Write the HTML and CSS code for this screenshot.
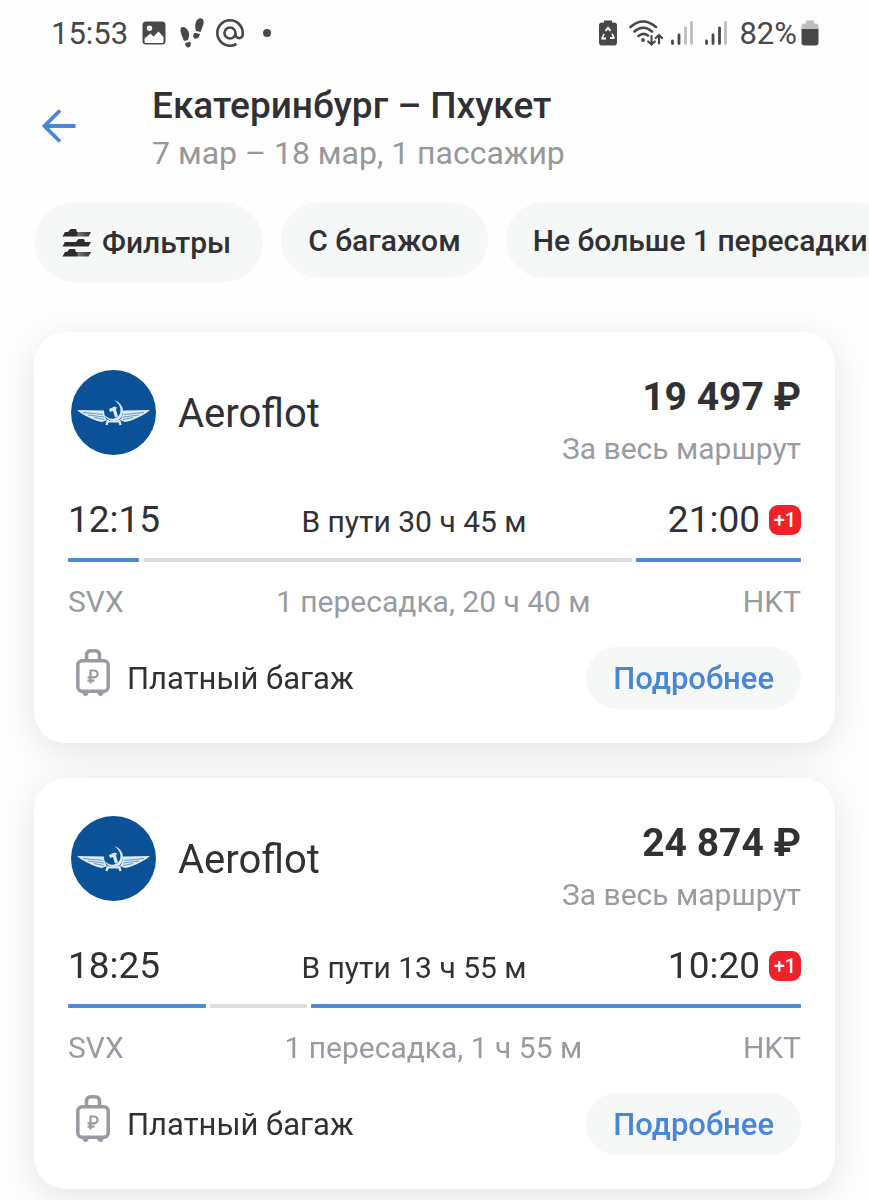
FILE: index.html
```
<!DOCTYPE html>
<html lang="ru">
<head>
    <meta charset="UTF-8">
    <meta name="viewport" content="width=device-width, initial-scale=1">
    <title>Екатеринбург – Пхукет</title>
    <link rel="stylesheet" href="styles.css">
</head>
<body>

<!-- shared icons -->
<svg class="sprite" width="0" height="0">
    <symbol id="logo" viewBox="0 0 85 85">
        <circle cx="42.5" cy="42.5" r="42.5" fill="#0b5197"/>
        <g fill="#dcebf7">
            <path d="M6 40L33 40.500Q33 46 36 50L31 52Q25 51 20 48.500L14 45.500Q9 43 6 40z"/>
            <path d="M79 40L52 40.500Q52 46 49 50L54 52Q60 51 65 48.500L71 45.500Q76 43 79 40z"/>
            <path d="M43 30Q52 33 52 41.500Q51 51 42.500 51Q35.500 50.500 33.500 45Q38 49.500 43 48.500Q49 47 49.500 41Q49.500 34 43 30z"/>
            <path d="M38 39L43.500 36.500L46 37.500L45 39.500L47 46.500L44 47.500L42 41L39 42z"/>
            <path d="M37 50L35.500 55M48 50L49.500 55" stroke="#dcebf7" stroke-width="2.400"/>
            <path d="M37 50.500H48V52.500H37z"/>
        </g>
        <path d="M12 42.500L32 44.500M17 45L33 47M73 42.500L53 44.500M68 45L52 47M23 47.500L33 49.500M62 47.500L52 49.500" stroke="#4c83b7" stroke-width=".8"/>
    </symbol>
    <symbol id="bag" viewBox="0 0 34 47">
        <g fill="none" stroke="#999ba3" stroke-width="3.600">
            <rect x="1.800" y="11.800" width="30.400" height="30.400" rx="4.500"/>
            <path d="M10.500 11V6.500Q10.500 1.800 15 1.800H19Q23.500 1.800 23.500 6.500V11"/>
            <path d="M14.500 34.500V21.500H18.200A3.400 3.400 0 0 1 18.200 28.300H11.500M11.500 31.600H18.500" stroke-width="2.200"/>
        </g>
        <path d="M6 43H13Q12 47 9.500 47T6 43zM21 43H28Q27 47 24.500 47T21 43z" fill="#999ba3"/>
    </symbol>
</svg>

<div class="status">
    <div class="status-side">
        <span>15:53</span>
        <svg class="ic-photo" width="24" height="24" viewBox="0 0 24 24">
            <path fill="#484848" fill-rule="evenodd" d="M4 0.500H20Q23.500 0.500 23.500 4V20Q23.500 23.500 20 23.500H4Q0.500 23.500 0.500 20V4Q0.500 0.500 4 0.500zM2.500 17.500V20.500Q2.500 22 4 22H20Q21.500 22 21.500 20.500V16L16.500 10.500L11.500 15.500L8.500 12.500zM7.500 4.500A2.700 2.700 0 1 0 7.500 9.900A2.700 2.700 0 0 0 7.500 4.500z"/>
        </svg>
        <svg class="ic-steps" width="24" height="30" viewBox="0 0 24 30">
            <g fill="#484848">
                <path d="M.500 13C0 9.500 2 8.300 4.500 9.300C8 11 9.500 15 9 18C8.700 20 8.300 21 8 22L4 23C3 20 1 16.500 .500 13z"/>
                <path d="M5 25L10.300 23.700Q12 28 8.700 29.500Q5.800 30 5 25z"/>
                <path d="M23.700 4.500C24 1 21.500 -.500 19 .500C16 2 15 5.500 15.300 9C15.500 11 15.700 12 16.200 13L20.500 14C21.500 11 23.300 8 23.700 4.500z"/>
                <path d="M20 16L14.500 14.800Q11.800 18.500 14.500 20.500Q18.500 21.500 20 16z"/>
            </g>
        </svg>
        <svg class="ic-at" width="28" height="28" viewBox="0 0 28 28">
            <g fill="none" stroke="#484848" stroke-width="2.600">
                <circle cx="14" cy="14" r="5.500"/>
                <path d="M19.500 14V15.500A3.600 3.600 0 0 0 26.700 15.500V14A12.700 12.700 0 1 0 14 26.700Q17.500 26.700 20.500 25"/>
            </g>
        </svg>
        <i class="dot"></i>
    </div>
    <div class="status-side">
        <svg width="18" height="26" viewBox="0 0 18 26">
            <path fill="#484848" d="M5 2.500V.500H13V2.500H15Q18 2.500 18 5.500V22.500Q18 25.500 15 25.500H3Q0 25.500 0 22.500V5.500Q0 2.500 3 2.500z"/>
            <path d="M6.500 11L9 7.500L11.500 11M13 13.500L15 18H11M7 18.500H3L5 14" fill="none" stroke="#fff" stroke-width="1.800" stroke-linejoin="round"/>
        </svg>
        <svg class="ic-wifi" width="34" height="26" viewBox="0 0 34 26">
            <g fill="none" stroke="#484848" stroke-width="2.600" stroke-linecap="round">
                <path d="M1.500 7Q14 -4 27 7M5.500 11.500Q14 4 23 11.500M9.500 16Q14 12 19 15.500"/>
                <path d="M22.500 16V24M19.200 21.500L22.500 24.500L25.800 21.500M30 23.500V15.500M26.700 18L30 15L33 18" stroke-width="2.200"/>
            </g>
            <circle cx="14" cy="20" r="1.900" fill="#484848"/>
        </svg>
        <svg class="ic-signal" width="22" height="24" viewBox="0 0 22 24">
            <g stroke-width="2.800" stroke-linecap="round">
                <path stroke="#484848" d="M1.500 20V22.500M8 14V22.500"/>
                <path stroke="#bdbdbd" d="M14.500 7V22.500M20.500 1.500V22.500"/>
            </g>
        </svg>
        <svg class="ic-signal" width="22" height="24" viewBox="0 0 22 24">
            <g stroke-width="2.800" stroke-linecap="round">
                <path stroke="#484848" d="M1.500 20V22.500M8 14V22.500M14.500 7V22.500"/>
                <path stroke="#bdbdbd" d="M20.500 1.500V22.500"/>
            </g>
        </svg>
        <span class="percent">82%</span>
        <svg class="ic-battery" width="18" height="26" viewBox="0 0 18 26">
            <path fill="#bdbdbd" d="M5 3.500V.500H13V3.500H15Q17.500 3.500 17.500 6V10H.500V6Q.500 3.500 3 3.500z"/>
            <path fill="#484848" d="M.500 9H17.500V22.500Q17.500 25.500 14.500 25.500H3.500Q.500 25.500 .500 22.500z"/>
        </svg>
    </div>
</div>

<header class="header">
    <button class="back" type="button" aria-label="Назад">
        <svg width="34" height="34" viewBox="0 0 34 34">
            <path d="M33.500 17H3M18 1.500L2.500 17L18 32.500" fill="none" stroke="#4a86d8" stroke-width="3.800"/>
        </svg>
    </button>
    <div>
        <h1>Екатеринбург – Пхукет</h1>
        <p>7 мар – 18 мар, 1 пассажир</p>
    </div>
</header>

<nav class="filters">
    <button class="chip chip-main" type="button">
        <svg width="30" height="28" viewBox="0 0 30 28">
            <defs>
                <linearGradient id="fade">
                    <stop offset=".5" stop-color="#2c2e2e"/>
                    <stop offset=".55" stop-color="#777"/>
                    <stop offset="1" stop-color="#2c2e2e"/>
                </linearGradient>
            </defs>
            <g fill="url(#fade)">
                <path d="M3 3H6L8.500 0H14L15 3H29L26.500 7.500H.500z"/>
                <path d="M3 23H5L7.500 20H13L14 23H29L26.500 27.500H.500z"/>
            </g>
            <path d="M3 13H14L16.500 10H22L23 13H29L26.500 17.500H.500z" fill="#2c2e2e"/>
        </svg>
        Фильтры
    </button>
    <button class="chip" type="button">С багажом</button>
    <button class="chip" type="button">Не больше 1 пересадки</button>
</nav>

<main class="tickets">
    <article class="ticket">
        <div class="ticket-head">
            <svg class="logo" width="85" height="85"><use href="#logo"/></svg>
            <h2>Aeroflot</h2>
            <div class="cost">
                <div class="price">19 497 ₽</div>
                <div class="note">За весь маршрут</div>
            </div>
        </div>
        <div class="times">
            <span class="time">12:15</span>
            <span class="duration">В пути 30 ч 45 м</span>
            <span class="time">21:00 <b class="plus">+1</b></span>
        </div>
        <div class="route">
            <i style="flex-grow: 71"></i>
            <i class="wait" style="flex-grow: 489"></i>
            <i style="flex-grow: 165"></i>
        </div>
        <div class="stops">
            <span>SVX</span>
            <span>1 пересадка, 20 ч 40 м</span>
            <span>HKT</span>
        </div>
        <div class="ticket-foot">
            <svg class="bag" width="34" height="47"><use href="#bag"/></svg>
            <span>Платный багаж</span>
            <button class="more" type="button">Подробнее</button>
        </div>
    </article>

    <article class="ticket">
        <div class="ticket-head">
            <svg class="logo" width="85" height="85"><use href="#logo"/></svg>
            <h2>Aeroflot</h2>
            <div class="cost">
                <div class="price">24 874 ₽</div>
                <div class="note">За весь маршрут</div>
            </div>
        </div>
        <div class="times">
            <span class="time">18:25</span>
            <span class="duration">В пути 13 ч 55 м</span>
            <span class="time">10:20 <b class="plus">+1</b></span>
        </div>
        <div class="route">
            <i style="flex-grow: 138"></i>
            <i class="wait" style="flex-grow: 97"></i>
            <i style="flex-grow: 490"></i>
        </div>
        <div class="stops">
            <span>SVX</span>
            <span>1 пересадка, 1 ч 55 м</span>
            <span>HKT</span>
        </div>
        <div class="ticket-foot">
            <svg class="bag" width="34" height="47"><use href="#bag"/></svg>
            <span>Платный багаж</span>
            <button class="more" type="button">Подробнее</button>
        </div>
    </article>
</main>

</body>
</html>
```
FILE: styles.css
```
* {
    box-sizing: border-box;
}
body {
    margin: 0;
    background: #fefefe;
    color: #313133;
    font-family: Roboto, "Noto Sans", sans-serif;
    font-size: 30px;
    overflow-x: hidden;
}
h1, h2, p {
    margin: 0;
}
button {
    border: 0;
    font-family: inherit;
    cursor: pointer;
}
svg {
    display: block;
    flex: none;
}
.sprite {
    position: absolute;
}

/* status bar */
.status {
    display: flex;
    justify-content: space-between;
    height: 66px;
    padding: 0 50px 0 51px;
    color: #484848;
    font-size: 31px;
}
.status-side {
    display: flex;
    align-items: center;
}
.ic-photo {
    margin-left: 14px;
}
.ic-steps {
    margin-left: 14px;
}
.ic-at {
    margin-left: 12px;
}
.dot {
    width: 8px;
    height: 8px;
    margin-left: 19px;
    border-radius: 50%;
    background: #484848;
}
.ic-wifi {
    margin-left: 12px;
}
.ic-signal {
    margin-left: 8px;
}
.ic-signal + .ic-signal {
    margin-left: 12px;
}
.percent {
    margin-left: 12px;
}
.ic-battery {
    margin-left: 4px;
}

/* header */
.header {
    display: flex;
    align-items: flex-start;
    padding: 16px 34px 0;
}
.back {
    width: 118px;
    padding: 27px 8px;
    background: none;
}
.header h1 {
    font-size: 37px;
    font-weight: 500;
    line-height: 48px;
}
.header p {
    color: #98989a;
    font-size: 32px;
    line-height: 46px;
}

/* filter chips */
.filters {
    display: flex;
    align-items: flex-start;
    gap: 18px;
    margin-top: 26px;
    padding-left: 35px;
    overflow: hidden;
}
.chip {
    flex: none;
    height: 76px;
    padding: 0 27px;
    border-radius: 40px;
    background: #f6f8f8;
    color: #313133;
    font-size: 30px;
    font-weight: 500;
}
.chip-main {
    display: flex;
    align-items: center;
    gap: 10px;
    height: 80px;
    padding: 1px 32px 0 27px;
}

/* tickets */
.tickets {
    display: grid;
    gap: 35px;
    padding: 50px 34px 11px;
    filter: drop-shadow(0 8px 18px rgba(0, 0, 0, .1));
}
.ticket {
    padding: 38px 34px 34px;
    border-radius: 32px;
    background: #fff;
}
.ticket-head {
    display: flex;
    align-items: flex-start;
}
.logo {
    margin-left: 3px;
}
.ticket-head h2 {
    margin-left: 22px;
    font-size: 40px;
    font-weight: 400;
    line-height: 88px;
}
.cost {
    margin-left: auto;
    text-align: right;
}
.price {
    font-size: 39px;
    font-weight: 700;
    line-height: 54px;
}
.note {
    color: #999ba3;
    line-height: 50px;
}
.times {
    display: flex;
    align-items: baseline;
    justify-content: space-between;
    margin-top: 24px;
    line-height: 44px;
}
.time {
    display: flex;
    align-items: center;
    gap: 9px;
    font-size: 37px;
}
.plus {
    width: 32px;
    border-radius: 9px;
    background: #ee2228;
    color: #fff;
    font-size: 20px;
    font-weight: 500;
    line-height: 30px;
    text-align: center;
}
.route {
    display: flex;
    gap: 4px;
    margin-top: 14px;
}
.route i {
    height: 4px;
    border-radius: 1px;
    background: #4f87d7;
}
.route .wait {
    background: #dedede;
}
.stops {
    display: flex;
    justify-content: space-between;
    margin-top: 20px;
    color: #999ba3;
    line-height: 40px;
}
.ticket-foot {
    display: flex;
    align-items: center;
    margin-top: 25px;
    font-size: 31px;
}
.bag {
    margin: 0 17px 11px 8px;
}
.more {
    height: 62px;
    margin-left: auto;
    padding: 0 27px;
    border-radius: 31px;
    background: #f6f8f8;
    color: #4a86d8;
    font-size: 31px;
    font-weight: 500;
}
```
